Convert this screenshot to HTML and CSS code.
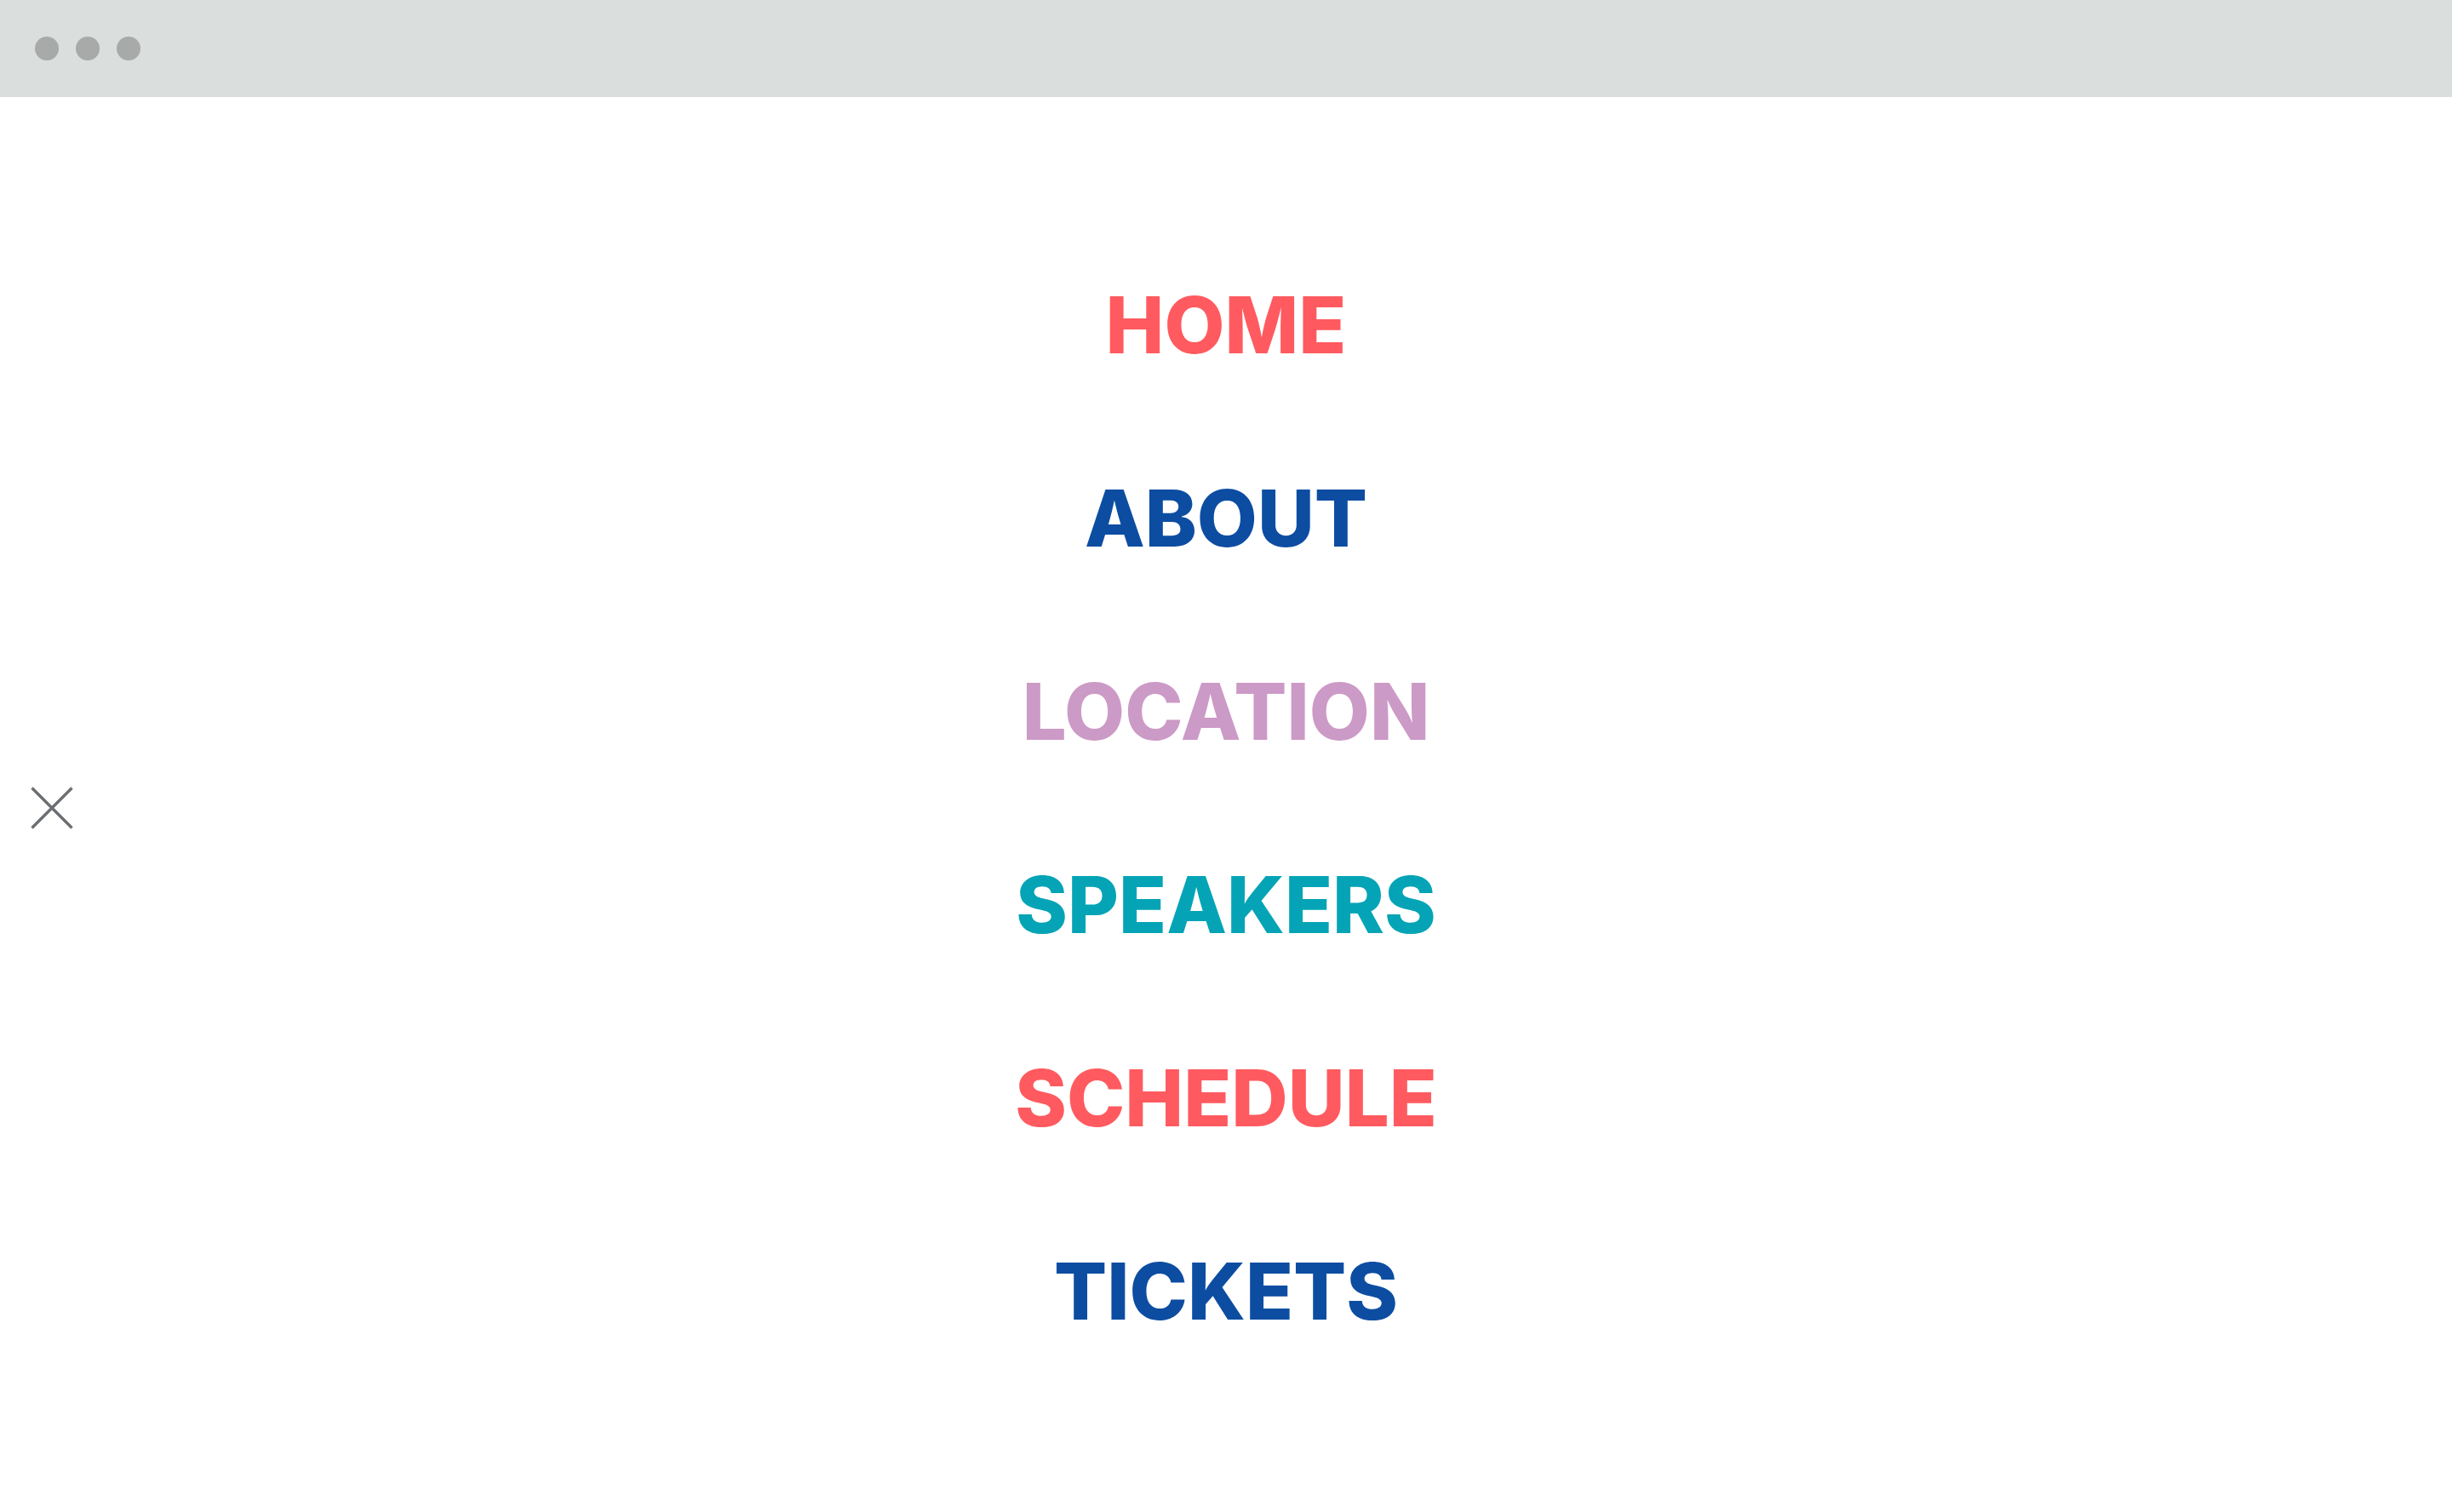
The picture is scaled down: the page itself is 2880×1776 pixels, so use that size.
FILE: index.html
```html
<!DOCTYPE html>
<html lang="en">
<head>
<meta charset="utf-8">
<title>Menu</title>
<link rel="stylesheet" href="styles.css">
</head>
<body>
<header class="chrome">
  <span class="dot"></span>
  <span class="dot"></span>
  <span class="dot"></span>
</header>
<main class="menu">
  <button class="close" aria-label="Close menu">
    <svg viewBox="0 0 50 50" width="50" height="50">
      <path d="M1.5 1.5 L48.5 48.5 M48.5 1.5 L1.5 48.5" stroke="#6b6e73" stroke-width="3.4" fill="none"/>
    </svg>
  </button>
  <nav class="nav">
    <a class="item coral" href="#">HOME</a>
    <a class="item navy" href="#">ABOUT</a>
    <a class="item lilac" href="#">LOCATION</a>
    <a class="item teal" href="#">SPEAKERS</a>
    <a class="item coral" href="#">SCHEDULE</a>
    <a class="item navy" href="#">TICKETS</a>
  </nav>
</main>
</body>
</html>
```
FILE: styles.css
```css
html, body {
  margin: 0;
  padding: 0;
  background: #ffffff;
}
body {
  width: 2880px;
  height: 1776px;
  overflow: hidden;
  font-family: "Inter", "Roboto", sans-serif;
}
.chrome {
  height: 114px;
  background: #dadedd;
  display: flex;
  align-items: center;
  gap: 20px;
  padding-left: 41px;
  box-sizing: border-box;
}
.dot {
  width: 28px;
  height: 28px;
  border-radius: 50%;
  background: #a8aaa9;
}
.menu {
  position: relative;
  height: 1662px;
}
.close {
  position: absolute;
  left: 36px;
  top: 810px;
  width: 50px;
  height: 50px;
  padding: 0;
  border: 0;
  background: none;
}
.close svg {
  display: block;
}
.nav {
  display: flex;
  flex-direction: column;
  align-items: center;
  padding-top: 154px;
}
.item {
  display: block;
  height: 227px;
  line-height: 227px;
  font-size: 92px;
  font-weight: 800;
  letter-spacing: 0;
  text-decoration: none;
}
.coral { color: #ff5a5f; }
.navy { color: #0c4da2; }
.lilac { color: #cc9ac6; }
.teal { color: #04a4b6; }
```
